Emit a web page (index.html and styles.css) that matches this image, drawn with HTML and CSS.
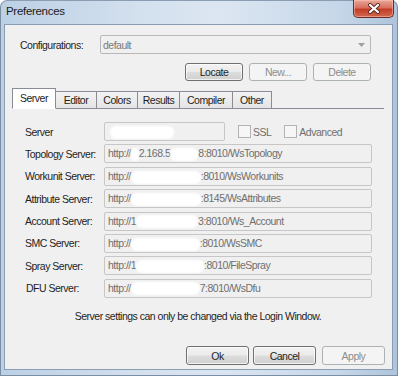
FILE: index.html
```html
<!DOCTYPE html>
<html lang="en">
<head>
    <meta charset="UTF-8">
    <title>Preferences</title>
    <link rel="stylesheet" href="styles.css">
</head>
<body>
    <div class="window">
        <div class="titlebar">
            <span class="title">Preferences</span>
            <button class="close">
                <svg width="14" height="11" viewBox="0 0 14 11">
                    <path d="M3 2 L11 9 M11 2 L3 9" stroke="#5b2a22" stroke-width="4" stroke-linecap="round"/>
                    <path d="M3 2 L11 9 M11 2 L3 9" stroke="#ffffff" stroke-width="2.2" stroke-linecap="round"/>
                </svg>
            </button>
        </div>

        <div class="client">
            <div class="config-row">
                <span class="config-label">Configurations:</span>
                <div class="combo">
                    <span>default</span>
                    <svg width="7" height="4" viewBox="0 0 7 4"><path d="M0 0 H7 L3.5 4 Z" fill="#a0a0a0"/></svg>
                </div>
            </div>

            <div class="config-buttons">
                <button class="button">Locate</button>
                <button class="button" disabled>New...</button>
                <button class="button" disabled>Delete</button>
            </div>

            <div class="tabs">
                <div class="tab tab-server active">Server</div>
                <div class="tab tab-editor">Editor</div>
                <div class="tab tab-colors">Colors</div>
                <div class="tab tab-results">Results</div>
                <div class="tab tab-compiler">Compiler</div>
                <div class="tab tab-other">Other</div>
            </div>

            <div class="panel">
                <div class="row">
                    <span class="label">Server</span>
                    <div class="field field-short"><span class="mask mask-server"></span></div>
                    <label class="check"><span class="box"></span>SSL</label>
                    <label class="check"><span class="box"></span>Advanced</label>
                </div>
                <div class="row">
                    <span class="label">Topology Server:</span>
                    <div class="field">http://<span class="mask mask-a"></span>2.168.5<span class="mask mask-b"></span>8:8010/WsTopology</div>
                </div>
                <div class="row">
                    <span class="label">Workunit Server:</span>
                    <div class="field">http://<span class="mask mask-c"></span>:8010/WsWorkunits</div>
                </div>
                <div class="row">
                    <span class="label">Attribute Server:</span>
                    <div class="field">http://<span class="mask mask-c"></span>:8145/WsAttributes</div>
                </div>
                <div class="row">
                    <span class="label">Account Server:</span>
                    <div class="field">http://1<span class="mask mask-d"></span>3:8010/Ws_Account</div>
                </div>
                <div class="row">
                    <span class="label">SMC Server:</span>
                    <div class="field">http://<span class="mask mask-e"></span>:8010/WsSMC</div>
                </div>
                <div class="row">
                    <span class="label">Spray Server:</span>
                    <div class="field">http://1<span class="mask mask-f"></span>:8010/FileSpray</div>
                </div>
                <div class="row">
                    <span class="label label-dfu">DFU Server:</span>
                    <div class="field">http://<span class="mask mask-g"></span>7:8010/WsDfu</div>
                </div>

                <p class="note">Server settings can only be changed via the Login Window.</p>
            </div>

            <div class="dialog-buttons">
                <button class="button wide">Ok</button>
                <button class="button wide">Cancel</button>
                <button class="button wide apply" disabled>Apply</button>
            </div>
        </div>
    </div>
</body>
</html>
```

FILE: styles.css
```css
html, body {
    margin: 0;
    padding: 0;
}

body {
    width: 400px;
    height: 378px;
    background: #ffffff;
    font-family: "Liberation Sans", Arial, sans-serif;
    font-size: 10.5px;
    letter-spacing: -0.5px;
    color: #1e1e1e;
    overflow: hidden;
}

.window {
    width: 398px;
    height: 376px;
    box-sizing: border-box;
    padding: 0 4px 5px 3px;
    border-radius: 7px 7px 0 0;
    border: 1px solid #7b8ea4;
    border-top-color: #8b9db2;
    background: linear-gradient(90deg, #bcd0e5 0%, #d3e0ee 35%, #dce6f2 55%, #c6d7e9 85%, #aec4dc 100%);
    display: flex;
    flex-direction: column;
}

.titlebar {
    height: 23px;
    display: flex;
    align-items: flex-start;
}

.title {
    margin: 4px 0 0 2px;
    font-size: 11.5px;
    letter-spacing: -0.3px;
    color: #1b1b1b;
}

.close {
    margin-left: auto;
    margin-top: -1px;
    margin-right: -1px;
    width: 41px;
    height: 18px;
    padding: 0;
    border: 1px solid #6b2c26;
    border-top: none;
    border-radius: 0 0 5px 5px;
    background: linear-gradient(#e9a899 0%, #d8705f 45%, #c43d26 55%, #d1684f 100%);
    box-shadow: inset 0 0 0 1px rgba(255, 200, 190, 0.5);
    display: flex;
    align-items: center;
    justify-content: center;
}

.client {
    flex: 1;
    background: #f0f0f0;
    border: 1px solid #8a9db3;
    display: flex;
    flex-direction: column;
}

.config-row {
    display: flex;
    align-items: center;
    margin: 10px 0 0 15px;
}

.config-label {
    width: 80px;
    white-space: nowrap;
}

.combo {
    width: 262px;
    height: 17px;
    border: 1px solid #b8b8b8;
    border-radius: 2px;
    background: #f0f0f0;
    color: #7a7a7a;
    display: flex;
    align-items: center;
    justify-content: space-between;
    padding: 0 5px 0 2px;
}

.config-buttons {
    display: flex;
    gap: 6px;
    margin: 9px 0 0 180px;
}

.button {
    width: 58px;
    height: 18px;
    padding: 0;
    font-family: inherit;
    font-size: 10.5px;
    letter-spacing: -0.5px;
    color: #1e1e1e;
    border: 1px solid #707070;
    border-radius: 3px;
    background: linear-gradient(#f2f2f2 0%, #ebebeb 48%, #dddddd 52%, #cfcfcf 100%);
    box-shadow: inset 0 0 0 1px rgba(255, 255, 255, 0.7);
}

.button:disabled {
    color: #8d8d8d;
    border-color: #adb2b5;
    background: #f4f4f4;
    box-shadow: none;
}

.tabs {
    display: flex;
    align-items: flex-end;
    margin: 7px 8px 0 7px;
    height: 20px;
    border-bottom: 1px solid #898c95;
}

.tab {
    box-sizing: border-box;
    height: 18px;
    line-height: 16px;
    margin-bottom: -1px;
    border: 1px solid #898c95;
    border-left: none;
    background: linear-gradient(#f3f3f3, #e4e4e4);
    text-align: center;
    white-space: nowrap;
}

.tab.active {
    height: 21px;
    line-height: 19px;
    border-left: 1px solid #898c95;
    border-bottom-color: #ffffff;
    background: #ffffff;
}

.tab-server { width: 44px; }
.tab-editor { width: 41px; }
.tab-colors { width: 41px; }
.tab-results { width: 42px; }
.tab-compiler { width: 53px; }
.tab-other { width: 39px; }

.panel {
    margin: 0 8px 0 7px;
    padding-top: 13px;
    display: flex;
    flex-direction: column;
    gap: 3.4px;
}

.row {
    display: flex;
    align-items: center;
    height: 19px;
    white-space: nowrap;
}

.label {
    width: 79px;
    padding-left: 13px;
}

.label-dfu {
    padding-left: 14px;
    width: 78px;
}

.field {
    width: 263px;
    height: 17px;
    line-height: 17px;
    padding: 0 0 0 3px;
    border: 1px solid #c6c6c6;
    border-radius: 2px;
    background: #f0f0f0;
    color: #6f6f6f;
    white-space: nowrap;
    overflow: hidden;
}

.field-short {
    width: 116px;
    margin-right: 13px;
}

.mask {
    display: inline-block;
    height: 9px;
    vertical-align: middle;
    background: #ffffff;
    border-radius: 4px;
    box-shadow: 0 0 2px 2px #ffffff;
}

.mask-server { width: 60px; margin-left: 4px; }
.mask-a { width: 4px; margin: 0 2px; }
.mask-b { width: 24px; margin: 0 2px; }
.mask-c { width: 66px; margin: 0 2px; }
.mask-d { width: 58px; margin: 0 2px; }
.mask-e { width: 65px; margin: 0 2px; }
.mask-f { width: 64px; margin: 0 2px; }
.mask-g { width: 65px; margin: 0 2px; }

.check {
    display: flex;
    align-items: center;
    margin-right: 13px;
    color: #6f6f6f;
}

.box {
    width: 11px;
    height: 11px;
    border: 1px solid #b3b3b3;
    background: #f6f6f6;
    margin-right: 2px;
}

.note {
    margin: 9px 0 0;
    text-align: center;
}

.dialog-buttons {
    display: flex;
    gap: 4px;
    margin: auto 0 4px 181px;
}

.button.wide {
    width: 63px;
    height: 19px;
}

.button.apply {
    margin-left: 2px;
}
```
